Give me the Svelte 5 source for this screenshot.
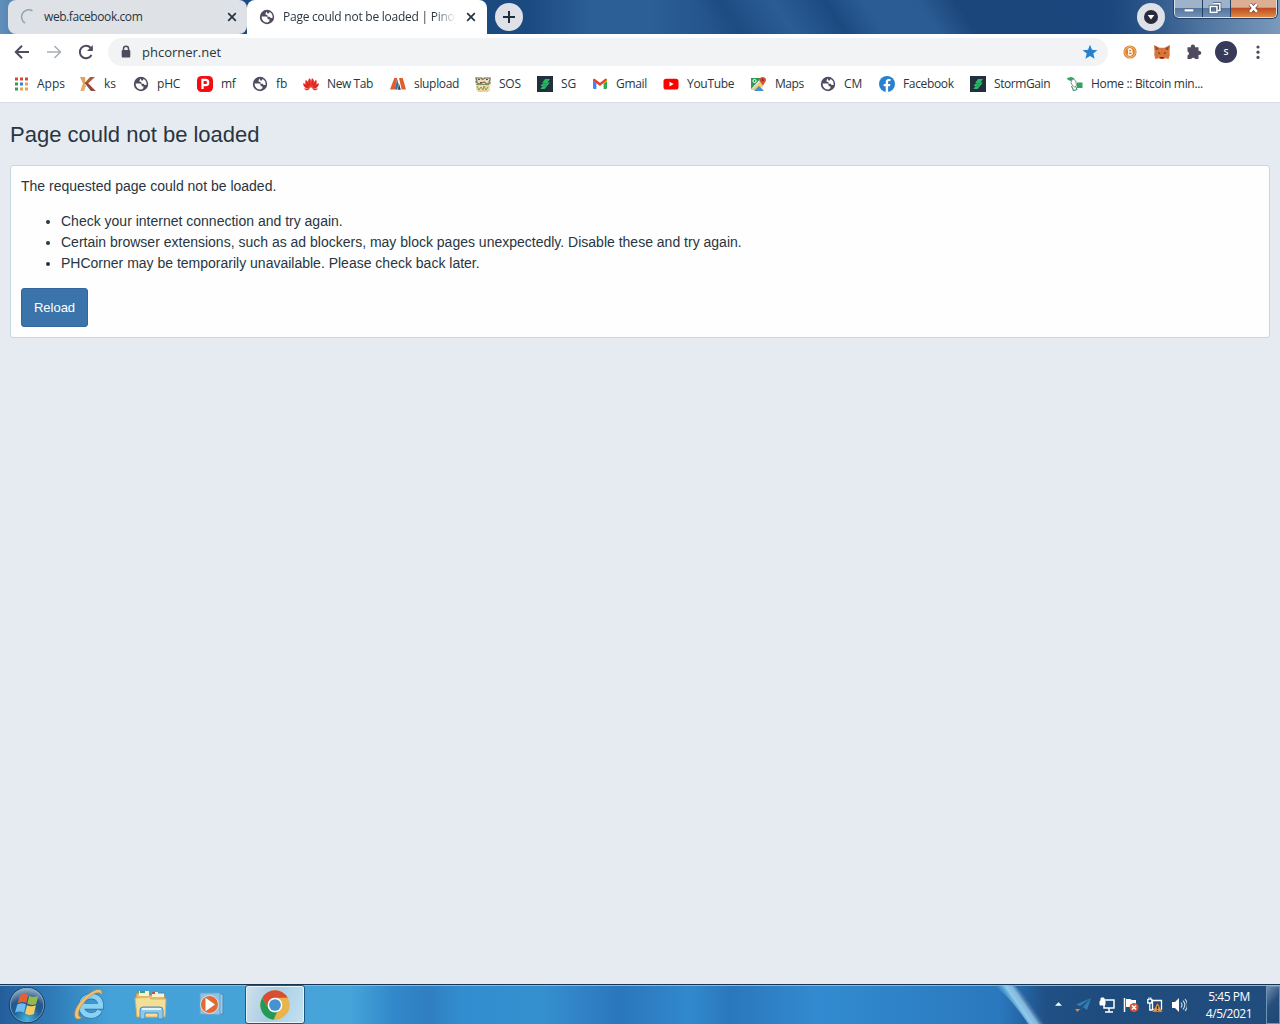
<script lang="ts">
	// Each bookmark owns a slot that runs up to the icon of the next one.
	const bookmarks = [
		{ icon: 'apps', label: 'Apps', slot: 67, spacing: 0 },
		{ icon: 'ks', label: 'ks', slot: 53, spacing: 0 },
		{ icon: 'globe', label: 'pHC', slot: 64, spacing: -0.2 },
		{ icon: 'mf', label: 'mf', slot: 55, spacing: -0.3 },
		{ icon: 'globe', label: 'fb', slot: 51, spacing: 0 },
		{ icon: 'huawei', label: 'New Tab', slot: 87, spacing: -0.4 },
		{ icon: 'slupload', label: 'slupload', slot: 85, spacing: -0.33 },
		{ icon: 'sos', label: 'SOS', slot: 62, spacing: -0.25 },
		{ icon: 'storm', label: 'SG', slot: 55, spacing: 0 },
		{ icon: 'gmail', label: 'Gmail', slot: 71, spacing: -0.3 },
		{ icon: 'youtube', label: 'YouTube', slot: 88, spacing: -0.3 },
		{ icon: 'maps', label: 'Maps', slot: 69, spacing: -0.45 },
		{ icon: 'globe', label: 'CM', slot: 59, spacing: 0 },
		{ icon: 'facebook', label: 'Facebook', slot: 91, spacing: -0.35 },
		{ icon: 'storm', label: 'StormGain', slot: 97, spacing: -0.42 },
		{ icon: 'home', label: 'Home :: Bitcoin min...', slot: 140, spacing: -0.32 }
	];

	const tips = [
		'Check your internet connection and try again.',
		'Certain browser extensions, such as ad blockers, may block pages unexpectedly. Disable these and try again.',
		'PHCorner may be temporarily unavailable. Please check back later.'
	];

	const appDots = [
		['#d0493a', '#d0493a', '#d0493a'],
		['#2f9e5b', '#3a80c8', '#e8a34c'],
		['#2f9e5b', '#e8a34c', '#e8a34c']
	];
</script>

{#snippet icon(name: string)}
	<svg class="icon" viewBox="0 0 16 16" aria-hidden="true">
		{#if name === 'apps'}
			{#each appDots as row, y}
				{#each row as fill, x}
					<rect x={2 + x * 5} y={1.5 + y * 5} width="3" height="3" {fill} />
				{/each}
			{/each}
		{:else if name === 'globe'}
			<circle cx="8" cy="8" r="7.2" fill="#514b60" />
			<path d="M2.6 7.6h4.8l1.3 1.3v1.4h1.7v1.9L8.6 13.6A5.7 5.7 0 0 1 2.6 7.6Z" fill="#fff" />
			<path d="M8 2.4 6.6 4v1.7l1.8.4v1.6h2.2l1 1.2 1.9.2A5.7 5.7 0 0 0 10.5 3L9.8 4.6H8.2Z" fill="#fff" />
		{:else if name === 'ks'}
			<path d="M0 1h5.2v6L3.6 15H.4L3 7.5Z" fill="#dda35b" />
			<path d="M10 1h5L7 8.6 4.6 7Z" fill="#b15c36" />
			<path d="M4.6 7 7.4 6.4 15.8 15h-4.9Z" fill="#8c4a3c" />
			<path d="M4.6 9 6.4 8.4 4.4 15H1.4Z" fill="#e2b477" />
		{:else if name === 'mf'}
			<rect width="16" height="16" rx="4.5" fill="#f50b12" />
			<path d="M5.5 13V3.8h3a2.7 2.7 0 0 1 0 5.4h-3" fill="none" stroke="#fff" stroke-width="2.3" />
		{:else if name === 'huawei'}
			<g fill="#e1251b" stroke="#e1251b" stroke-width=".5">
				<path d="M7.7 11.5C4.7 8 4.4 4.5 6.8 2.6c1.2 2.2 1.2 5.7.9 8.9ZM8.3 11.5c3-3.5 3.3-7 .9-8.9-1.2 2.2-1.2 5.7-.9 8.9Z" />
				<path d="M6.8 12C3 10.2 1.8 7 3 4.3c2.2 1.8 3.3 4.5 3.8 7.7ZM9.2 12C13 10.2 14.2 7 13 4.3c-2.2 1.8-3.3 4.5-3.8 7.7Z" />
				<path d="M6.4 12.6C2.7 12.6.6 10.7.4 7.5c2.5.8 4.5 2.6 6 5.1ZM9.6 12.6c3.7 0 5.8-1.9 6-5.1-2.5.8-4.5 2.6-6 5.1Z" />
				<path d="M6 13.3c-2 1-3.5.7-4.5-.6ZM10 13.3c2 1 3.5.7 4.5-.6Z" />
			</g>
		{:else if name === 'slupload'}
			<path d="M4.3 2h3L4.8 13.5H0Z" fill="#e45b2c" />
			<path d="M9 2h3.7L16 13.5h-4.3Z" fill="#e45b2c" />
			<path d="m7.3 3 1.2 5-1.3 6-2.5-1Z" fill="#3576a8" />
			<path d="m8.8 7 2 6.8H8Z" fill="#343b52" />
		{:else if name === 'sos'}
			<path d="M0 1h16v7l-1 2v5l-2 1H3l-2-2V9L0 7Z" fill="#e5dfc4" />
			<path d="M1 2h5l1.5 1.5L10 2h5v2l-1 2 1 1-3 1-3-2-2 1-3 1-3-2 1-1Z" fill="none" stroke="#80745b" stroke-width="1.2" />
			<path d="M3 3h2v1H3Zm8 0h2v1h-2ZM5 6h2v1H5Z" fill="#a13929" />
			<path d="M1 8.5h13" stroke="#7e9361" />
			<path d="m2 10 2 4 2-3 2 3 1-4 2 4 2-3" fill="none" stroke="#a28e43" />
			<path d="M3 15h10M10 10h4" stroke="#efc957" />
		{:else if name === 'storm'}
			<path d="M0 0h16v16H0Z" fill="#222f3d" />
			<path d="M8.1 3H13l-2.5 3.5h2.4L7.7 13H3.2l2.5-3H3.4l3-3.3H5.1Z" fill="#2bb866" />
			<path d="M6 7.5h4M6 9.8h3.5" stroke="#197b4f" stroke-width=".6" />
		{:else if name === 'gmail'}
			<path d="M1 4.5 4.4 7v6H2a1 1 0 0 1-1-1Z" fill="#4285f4" />
			<path d="M11.6 7 15 4.5V12a1 1 0 0 1-1 1h-2.4Z" fill="#34a853" />
			<path d="M11.6 4 13 3c1-.7 2 0 2 1v1.2l-3.4 2.6Z" fill="#fbbc04" />
			<path d="M1 4c0-1 1-1.7 2-1l5 3.8L13 3c1-.7 2 0 2 1.1L8 10 1 4.7Z" fill="#e34133" />
		{:else if name === 'youtube'}
			<rect x=".5" y="2.7" width="15" height="10.8" rx="2.6" fill="#f00" />
			<path d="m6.5 5.7 4.2 2.4-4.2 2.4Z" fill="#fff" />
		{:else if name === 'maps'}
			<path d="M0 2h12v12H0Z" fill="#dce8e7" />
			<path d="M0 2h10L0 13Z" fill="#30985a" />
			<path d="m0 14 10-9 3 3-6 6Z" fill="#f3cd5b" />
			<path d="m3 15 5-5 5 5Z" fill="#458fd0" />
			<circle cx="3.5" cy="5" r="1.6" fill="none" stroke="#fff" />
			<path d="M12 10C11 7 8.3 6 8.3 3.8A3.4 3.4 0 0 1 15 3.8C15 6 13 7 12 10Z" fill="#d65137" />
			<circle cx="11.7" cy="3.9" r="1.2" fill="#8e2f25" />
		{:else if name === 'facebook'}
			<circle cx="8" cy="8" r="8" fill="#2880cf" />
			<path d="M6.7 16v-5.8h-2V8h2V6.2c0-2.2 1.3-3.3 3.2-3.3l1.6.1v2h-1c-1 0-1.4.5-1.4 1.3V8h2.3l-.4 2.2H9.1V16Z" fill="#fff" />
		{:else if name === 'home'}
			<path d="m0 2 4-1 3 1 1 3-2-1-2 1-3-1ZM10 6.5h5.5v5.5H10Z" fill="#2ba85b" />
			<path d="m4.5 4.5 2-1.5 2.3 2 .7 5-2 1-2-1.5-1.5-3Z" fill="#fff" stroke="#6d8a81" stroke-width=".9" />
			<path d="m4.5 10 2 4.5 3-.8M9 11l1 3" fill="none" stroke="#4b9471" stroke-width="1.1" />
		{/if}
	</svg>
{/snippet}

{#snippet cross()}
	<svg class="cross" viewBox="0 0 10 10" aria-hidden="true">
		<path d="m1.2 1.2 7.6 7.6m0-7.6L1.2 8.8" />
	</svg>
{/snippet}

<div class="screen">
	<header class="tabstrip">
		<div class="tab idle">
			<svg class="icon" viewBox="0 0 16 16" aria-hidden="true">
				<path d="M12.5 1.8A7 7 0 0 0 5 14" fill="none" stroke="#93a4ad" stroke-width="1.5" />
			</svg>
			<span class="tab-title">web.facebook.com</span>
			{@render cross()}
		</div>
		<div class="tab active">
			{@render icon('globe')}
			<span class="tab-title fade">Page could not be loaded | Pinoy</span>
			{@render cross()}
		</div>
		<button class="new-tab" aria-label="New tab">
			<svg viewBox="0 0 28 28"><path d="M14 8v12M8 14h12" stroke="#202d3c" stroke-width="2" /></svg>
		</button>
		<button class="tab-search" aria-label="Search tabs">
			<svg viewBox="0 0 28 28">
				<circle cx="14" cy="14" r="7" fill="#292b3d" />
				<path d="M10.7 12h6.6L14 16.5Z" fill="#fff" />
			</svg>
		</button>
		<div class="window-buttons">
			<button aria-label="Minimize">
				<svg viewBox="0 0 28 17"><rect x="9.5" y="9" width="10" height="3" fill="#fff" stroke="#52617e" stroke-width=".6" /></svg>
			</button>
			<button aria-label="Restore">
				<svg viewBox="0 0 28 17">
					<path d="M10.5 3.5h7v7h-2M7.5 6.5h7v6h-7Z" fill="none" stroke="#46546f" stroke-width="3" />
					<path d="M10.5 3.5h7v7h-2M7.5 6.5h7v6h-7Z" fill="none" stroke="#fff" stroke-width="1.6" />
				</svg>
			</button>
			<button class="close" aria-label="Close">
				<svg viewBox="0 0 46 17">
					<path d="m19.5 4 7 8m0-8-7 8" stroke="#6a3e3a" stroke-width="4" />
					<path d="m19.5 4 7 8m0-8-7 8" stroke="#fff" stroke-width="2.6" />
				</svg>
			</button>
		</div>
	</header>

	<nav class="toolbar">
		<svg class="nav-icon" viewBox="0 0 16 16"><path d="M15 8H2m6-6.2L1.8 8 8 14.2" /></svg>
		<svg class="nav-icon dim" viewBox="0 0 16 16"><path d="M1 8h13M8.5 2l6 6-6 6" /></svg>
		<svg class="nav-icon" viewBox="0 0 16 16"><path d="M13.5 11A6.2 6.2 0 1 1 12.6 3.8L14 5.5" /><path class="solid" d="M14.8 1v6H9Z" /></svg>
		<div class="address">
			<svg class="lock" viewBox="0 0 10 14">
				<path d="M2.5 6V3.7a2.5 2.5 0 0 1 5 0V6" fill="none" stroke="#514b60" stroke-width="1.5" />
				<rect x=".7" y="5" width="8.6" height="7.5" rx="1" fill="#514b60" />
			</svg>
			<span class="url">phcorner.net</span>
			<svg class="icon" viewBox="0 0 16 16">
				<path d="m8 .8 2 5 5.4.4-4.1 3.4 1.3 5.2L8 12l-4.6 2.8 1.3-5.2L.6 6.2 6 5.8Z" fill="#2580cf" />
			</svg>
		</div>
		<div class="extensions">
			<svg class="icon" viewBox="0 0 16 16">
				<circle cx="8" cy="8" r="6.6" fill="#df812a" />
				<circle cx="8" cy="8" r="5.3" fill="none" stroke="#f7dfc2" stroke-width=".6" />
				<path d="M6.6 5.2v5.6M5.6 5.2h3c2 0 2 2.7 0 2.7h-2 2.3c2 0 2 2.9 0 2.9H5.6M7.3 4v1m1.5-1v1m-1.5 6v1m1.5-1v1" fill="none" stroke="#fff" stroke-width="1.1" />
			</svg>
			<svg class="icon" viewBox="0 0 16 16">
				<path d="m0 1 5.6 2.7h4.8L16 1l-.5 7 .3 3-1.2 4-3.5-.8-1.3.8H6.2l-1.3-.8-3.5.8L.2 11l.3-3Z" fill="#d9753a" />
				<path d="m1 2 4 3-3 1.3Zm14 0-4 3 3 1.3Z" fill="#8e4932" />
				<path d="m4 8 2.5 1.2L5 10Zm8 0L9.5 9.2 11 10Z" fill="#412e38" />
				<path d="M6 13h4l-.7 1.5H6.7Z" fill="#40313a" />
			</svg>
			<svg class="icon" viewBox="0 0 16 16">
				<path d="M1.5 3.2h3.4a2.1 2.1 0 1 1 4 0h3.6v3.7a2.1 2.1 0 1 1 0 4v4.2H9.2a2.2 2.2 0 0 0-4 0H1.5v-3.5a2.1 2.1 0 0 0 0-4Z" fill="#514b60" />
			</svg>
			<span class="avatar">S</span>
			<svg class="icon" viewBox="0 0 16 16" fill="#514b60">
				<circle cx="8" cy="3" r="1.6" /><circle cx="8" cy="8.2" r="1.6" /><circle cx="8" cy="13.4" r="1.6" />
			</svg>
		</div>
	</nav>

	<nav class="bookmarks">
		{#each bookmarks as b}
			<a href="#top" style:width="{b.slot}px">
				{@render icon(b.icon)}
				<span style:letter-spacing="{b.spacing}px">{b.label}</span>
			</a>
		{/each}
	</nav>

	<main>
		<h1>Page could not be loaded</h1>
		<section class="block">
			<p>The requested page could not be loaded.</p>
			<ul>
				{#each tips as tip}
					<li>{tip}</li>
				{/each}
			</ul>
			<button class="reload">Reload</button>
		</section>
	</main>

	<footer class="taskbar">
		<div class="launchers">
			<svg class="start" viewBox="0 0 38 38">
				<defs>
					<radialGradient id="orb" cx=".5" cy=".9" r=".9">
						<stop offset="0" stop-color="#42b4df" />
						<stop offset=".45" stop-color="#205d91" />
						<stop offset=".65" stop-color="#28588a" />
						<stop offset="1" stop-color="#a3bccc" />
					</radialGradient>
				</defs>
				<circle cx="19" cy="19" r="17.7" fill="url(#orb)" stroke="#193f69" />
				<circle cx="19" cy="19" r="16.7" fill="none" stroke="#7ba6c5" stroke-width=".8" />
				<path d="M11.8 9.2c3-1.9 5.8-2 8.4-.2L18.3 17c-2.6-1.5-5.2-1.5-8.6.2Z" fill="#e36135" />
				<path d="M21.2 9.8c2.7 1.4 5.2 1.8 9 .2l-2 8c-3.2 1.5-6.2 1.2-8.9-.4Z" fill="#93ba4b" />
				<path d="M9.3 18.4c3.3-1.6 6-1.5 8.7 0l-2 8.2c-2.7-1.5-5.7-1.5-9 0Z" fill="#6bbcf0" />
				<path d="M19 19.2c2.7 1.4 5.4 1.5 8.9.1l-2 8.6c-3.2 1.5-6.4 1.2-8.9-.4Z" fill="#f6cb62" />
			</svg>
			<svg class="ie" viewBox="0 0 34 34">
				<path d="M27.5 22.5c-1.6 3.4-4.3 5-8.3 5-5.8 0-9.8-3.9-9.8-9.4 0-5.9 4-10 9.9-10 6.1 0 9.9 4.3 9.4 10.2H12" fill="none" stroke="#276faf" stroke-width="6.2" />
				<path d="M27.5 22.5c-1.6 3.4-4.3 5-8.3 5-5.8 0-9.8-3.9-9.8-9.4 0-5.9 4-10 9.9-10 6.1 0 9.9 4.3 9.4 10.2H10" fill="none" stroke="#8bd1f2" stroke-width="4.9" />
				<path d="M30 7c1-8-6-6.5-13.5-1C7.5 12.5 1 22.5 3 29c1 3 5 2.5 8 0-6 1.8-6-6 .5-14C18 7 27 1.2 30 7Z" fill="#edc16f" stroke="#a67b48" stroke-width=".5" />
			</svg>
			<svg class="folder" viewBox="0 0 34 30">
				<path d="M2 3h8l2 2h19v22H2Z" fill="#e4bd69" stroke="#a88653" />
				<path d="M5 1h10v5H5ZM18 2h12v5H18Z" fill="#f8f3cf" />
				<path d="M6 1h5v2H6Z" fill="#3d9d73" /><path d="M18 2h3v2h-3Z" fill="#bd5548" /><path d="M24 2h6v1.5h-6Z" fill="#4a91c6" />
				<path d="m1 8 14-1 2 2h15l-1 18H3Z" fill="#f5df98" stroke="#d5b36a" />
				<path d="M6 29V20q0-3 3-3h17q3 0 3 3v9h-5v-6H11v6Z" fill="#8bc9ed" stroke="#4e89b9" />
				<path d="M8 19h19" stroke="#dff6fb" stroke-width="2" />
			</svg>
			<svg class="player" viewBox="0 0 26 26">
				<path d="M4 2h20v20H4Z" fill="#9ccae5" stroke="#4e8abb" />
				<path d="M1 1h20v22l-20-1Z" fill="#8dc4e7" stroke="#64a2cc" />
				<circle cx="10.5" cy="12.5" r="9" fill="#e06b37" stroke="#d5e3e8" />
				<path d="M6.5 5.8 16 12.5l-9.5 6.7Z" fill="#fff" />
			</svg>
			<div class="running">
				<svg viewBox="0 0 48 48" aria-label="Chrome">
					<circle cx="24" cy="24" r="22" fill="#e9b44b" />
					<path d="M4.9 13A22 22 0 0 1 43 13H24a11 11 0 0 0-9.5 16.5Z" fill="#d84d35" />
					<path d="M4.9 13 14.5 29.5A11 11 0 0 0 27 34.6L22 46A22 22 0 0 1 4.9 13Z" fill="#229b58" />
					<circle cx="24" cy="24" r="11" fill="#fff" />
					<circle cx="24" cy="24" r="8.8" fill="#4793d1" />
				</svg>
			</div>
		</div>

		<svg class="sheen" viewBox="0 0 60 38" preserveAspectRatio="none">
			<defs>
				<linearGradient id="beam" gradientUnits="userSpaceOnUse" x1="20" y1="27" x2="38" y2="13">
					<stop offset="0" stop-color="#4496cd" stop-opacity="0" />
					<stop offset=".45" stop-color="#8fcbed" />
					<stop offset=".7" stop-color="#83b5da" />
					<stop offset="1" stop-color="#326091" stop-opacity="0" />
				</linearGradient>
			</defs>
			<path d="M0 0h22q22 15 38 38H38Q20 14 0 0Z" fill="url(#beam)" />
		</svg>

		<div class="tray">
			<svg class="tray-up" viewBox="0 0 8 5"><path d="m0 4 4-4 4 4Z" fill="#fff" /></svg>
			<svg viewBox="0 0 16 16">
				<path d="m16 1-4 12-4-3-3 3V9L1 7.6Z" fill="#327fb5" />
				<path d="m5 9 11-8-8 9-3 3Z" fill="#205480" /><path d="M0 12h5l-2.5 3Z" fill="#dd884b" />
			</svg>
			<svg viewBox="0 0 16 16">
				<path d="M5 3h10v8H5Zm5 8v4m-4 0h8" fill="#214d7d" stroke="#fff" stroke-width="1.5" />
				<path d="M1 4h5v4H1ZM2 4V1h3v3" fill="#fff" stroke="#fff" />
			</svg>
			<svg viewBox="0 0 16 16">
				<path d="M1.5 1v14" stroke="#fff" stroke-width="1.5" /><path d="M3 2h4l2 1h4v7H3Z" fill="#fff" />
				<circle cx="11" cy="10.5" r="4.5" fill="#d95436" /><path d="m9 8.5 4 4m0-4-4 4" stroke="#fff" stroke-width="1.5" />
			</svg>
			<svg viewBox="0 0 16 16">
				<path d="M5.5 3.5h9v9h-9ZM.8 2v4h4V2M2 .5V3M3.8.5V3M2.8 6v7h3" fill="none" stroke="#fff" stroke-width="1.3" />
				<path d="m10.5 6 5 9h-10Z" fill="#e39b4e" stroke="#704b38" stroke-width=".5" /><path d="M10.5 9v3m0 1v1" stroke="#302b34" stroke-width="1.3" />
			</svg>
			<svg viewBox="0 0 16 16">
				<path d="M1 5h3l4-4v14l-4-4H1Z" fill="#fff" />
				<path d="M10 5.5q2 2.5 0 5M12 3.7q3.7 4.3 0 8.6M14 2q5 6 0 12" fill="none" stroke="#cddfeb" stroke-width="1.1" />
			</svg>
			<div class="clock"><span>5:45 PM</span><span>4/5/2021</span></div>
			<div class="show-desktop"></div>
		</div>
	</footer>
</div>

<style>
	:global(body) {
		margin: 0;
		overflow: hidden;
	}

	.screen {
		display: flex;
		flex-direction: column;
		width: 1280px;
		height: 1024px;
		background: #e6ebf2;
		color: #293540;
		font-family: "Open Sans", "Noto Sans", sans-serif;
		font-size: 12px;
	}

	svg {
		display: block;
		flex: none;
	}

	button {
		margin: 0;
		padding: 0;
		border: 0;
		background: none;
	}

	.icon {
		width: 16px;
		height: 16px;
	}

	.tabstrip {
		display: flex;
		flex: none;
		height: 34px;
		box-sizing: border-box;
		padding-left: 8px;
		background:
			linear-gradient(56deg, transparent 55%, #1d4c83 57%, #2b5d94 61%, #1b4a81 65%, #2b5d94 68%, #2b5d94 72%, #1b467c 75%, transparent 92%),
			linear-gradient(90deg, #628fba 0, #477eae 20px, #1b4a81 250px, #1b4a81 530px, #2c5f96 590px, #2c5f96 650px, #1a477e 780px, #1a477e 1110px, #6386ad 1240px, #7a9abb 1280px);
	}

	.tab {
		display: flex;
		align-items: center;
		box-sizing: border-box;
		height: 34px;
		padding-left: 12px;
	}

	.tab.idle {
		width: 239px;
		border-radius: 8px;
		background: #dee1e6;
	}

	.tab.active {
		width: 240px;
		border-radius: 8px 8px 0 0;
		background: #fff;
	}

	.tab-title {
		flex: none;
		width: 175px;
		margin: 0 8px;
		white-space: nowrap;
		line-height: 18px;
		letter-spacing: -0.42px;
	}

	.fade {
		letter-spacing: -0.25px;
		mask-image: linear-gradient(90deg, #000 86%, transparent 99%);
	}

	.cross {
		width: 10px;
		height: 10px;
		fill: none;
		stroke: #263341;
		stroke-width: 1.7;
	}

	.new-tab,
	.tab-search {
		width: 28px;
		height: 28px;
		margin: 3px 0 0 8px;
		border-radius: 50%;
		background: #dee2e8;
	}

	.tab-search {
		margin-left: 614px;
	}

	.window-buttons {
		display: flex;
		box-sizing: border-box;
		width: 103px;
		height: 18px;
		margin-left: 9px;
		overflow: hidden;
		border: 1px solid #d6e1ec;
		border-top: 0;
		border-radius: 0 0 5px 5px;
		box-shadow: 0 0 0 1px #273e63;
	}

	.window-buttons button {
		width: 28px;
		height: 17px;
		border-right: 1px solid #273e63;
		background: linear-gradient(#9eb2ca 0 45%, #53779f 50%, #7191b3);
	}

	.window-buttons svg {
		width: 100%;
		height: 17px;
	}

	.window-buttons .close {
		flex: 1;
		border: 0;
		background: linear-gradient(#dcae93 0 42%, #bd4e22 50%, #df8a45);
	}

	.toolbar {
		display: flex;
		flex: none;
		align-items: center;
		height: 36px;
		padding-left: 14px;
		background: #fff;
	}

	.nav-icon {
		width: 16px;
		height: 16px;
		margin-right: 16px;
		fill: none;
		stroke: #514b60;
		stroke-width: 2;
	}

	.dim {
		stroke: #a9b0b7;
		stroke-width: 1.6;
	}

	.nav-icon .solid {
		fill: #514b60;
		stroke: none;
	}

	.address {
		display: flex;
		align-items: center;
		box-sizing: border-box;
		width: 1000px;
		height: 28px;
		margin-left: -2px;
		padding: 0 10px 0 13px;
		border-radius: 14px;
		background: #f1f3f5;
	}

	.lock {
		width: 10px;
		height: 14px;
	}

	.url {
		flex: 1;
		margin-left: 11px;
		font-size: 13px;
	}

	.extensions {
		display: flex;
		align-items: center;
		margin-left: 14px;
		gap: 16px;
	}

	.avatar {
		width: 22px;
		height: 22px;
		margin: 0 -3px;
		border-radius: 50%;
		background: #373b59;
		color: #fff;
		font: 600 9px/22px "Open Sans", sans-serif;
		text-align: center;
	}

	.bookmarks {
		display: flex;
		flex: none;
		align-items: center;
		box-sizing: border-box;
		height: 33px;
		padding: 0 0 5px 13px;
		border-bottom: 1px solid #d8dfe6;
		background: #fff;
		overflow: hidden;
	}

	.bookmarks a {
		display: flex;
		flex: none;
		gap: 8px;
		align-items: center;
		color: inherit;
		line-height: 18px;
		text-decoration: none;
		white-space: nowrap;
	}

	main {
		flex: 1;
		padding: 0 10px;
		font-family: "Liberation Sans", Arial, sans-serif;
	}

	h1 {
		margin: 16px 0 15px;
		font-size: 22px;
		font-weight: 400;
		line-height: 31px;
	}

	.block {
		box-sizing: border-box;
		height: 173px;
		padding: 10px;
		border: 1px solid #c6d7de;
		border-radius: 3px;
		background: #fefefe;
		font-size: 14px;
		line-height: 21px;
	}

	.block p {
		margin: 0;
	}

	.block ul {
		margin: 14px 0;
		padding-left: 40px;
	}

	.reload {
		width: 67px;
		height: 39px;
		border: 1px solid #34669b;
		border-radius: 3px;
		background: #3b74aa;
		color: #fff;
		font: 13px "Liberation Sans", Arial, sans-serif;
	}

	.taskbar {
		display: flex;
		flex: none;
		box-sizing: border-box;
		height: 40px;
		border-top: 1px solid #163653;
		box-shadow: inset 0 1px #84bbdc;
		background: linear-gradient(90deg, #235e9b 0, #3180bb 60px, #44a2d8 110px, #46a4d9 350px, #3188ca 395px, #2f7fc2 430px, #318dcf 460px, #3590d0 540px, #2b76bd 620px, #3189cd 690px, #2b77bd 730px, #328bd0 820px, #2a78bd 1000px, #2568a8 1020px, #205086 1045px, #1e4c7e 1100px, #214d7d 1280px);
	}

	.launchers {
		display: flex;
		align-items: center;
		width: 1000px;
	}

	.start {
		width: 38px;
		height: 38px;
		margin-left: 8px;
	}

	.ie {
		width: 34px;
		height: 34px;
		margin-left: 26px;
	}

	.folder {
		width: 34px;
		height: 30px;
		margin-left: 28px;
	}

	.player {
		width: 26px;
		height: 26px;
		margin-left: 31px;
	}

	.running {
		display: grid;
		place-items: center;
		box-sizing: border-box;
		width: 60px;
		height: 39px;
		margin-left: 20px;
		border: 1px solid #1f567e;
		border-radius: 3px;
		box-shadow: inset 0 0 0 1px #e8f4fa;
		background: linear-gradient(110deg, #d2e0eb, #a8cee5 45%, #c3e2f2);
	}

	.running svg {
		width: 32px;
		height: 32px;
	}

	.sheen {
		width: 54px;
		height: 39px;
		margin-left: -6px;
	}

	.tray {
		display: flex;
		align-items: center;
		margin-left: 7px;
	}

	.tray svg {
		width: 16px;
		height: 16px;
		margin-right: 8px;
	}

	.tray .tray-up {
		width: 7px;
		height: 5px;
		margin-right: 13px;
	}

	.clock {
		display: flex;
		flex-direction: column;
		width: 58px;
		margin-left: 5px;
		color: #fff;
		font-size: 12px;
		line-height: 17px;
		text-align: center;
		white-space: nowrap;
		letter-spacing: -.45px;
	}

	.show-desktop {
		box-sizing: border-box;
		width: 14px;
		height: 38px;
		margin-left: 8px;
		border: 1px solid #7292b3;
		background: linear-gradient(130deg, #6f8eae, #284f7c 45%, #1d4674);
	}
</style>
